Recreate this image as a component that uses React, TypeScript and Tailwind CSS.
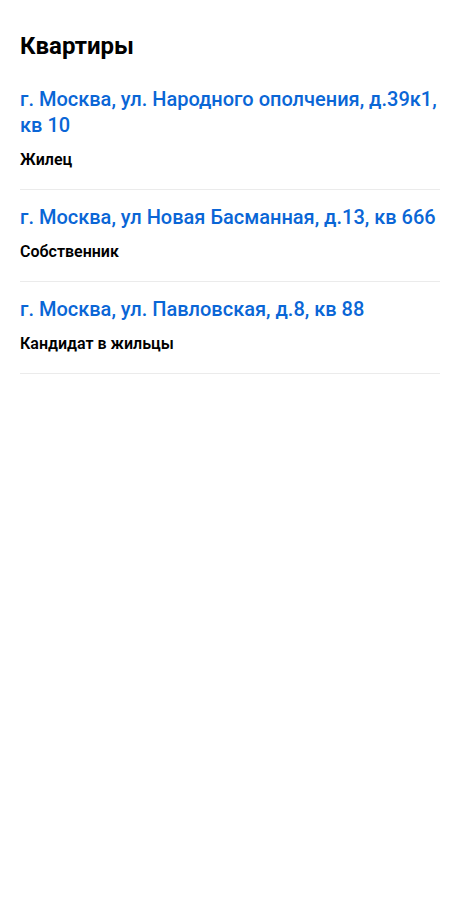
const flats = [
  { address: "г. Москва, ул. Народного ополчения, д.39к1, кв 10", role: "Жилец" },
  { address: "г. Москва, ул Новая Басманная, д.13, кв 666", role: "Собственник" },
  { address: "г. Москва, ул. Павловская, д.8, кв 88", role: "Кандидат в жильцы" },
];

const App = () => {
  return (
    <div className="min-h-[900px] bg-white px-5 pt-[31px] font-['Roboto',sans-serif] text-black">
      <h1 className="text-[24px] leading-[30px] font-bold">Квартиры</h1>
      <ul className="mt-[25px]">
        {flats.map((flat) => (
          <li key={flat.address} className="border-b border-[#ebebeb] pt-[14px] pb-[19px] first:pt-0">
            <a href="#" className="block text-[20px] leading-[26px] font-medium text-[#0a66d6]">
              {flat.address}
            </a>
            <p className="mt-3 text-[16px] leading-5 font-semibold">{flat.role}</p>
          </li>
        ))}
      </ul>
    </div>
  );
};

export default App;
